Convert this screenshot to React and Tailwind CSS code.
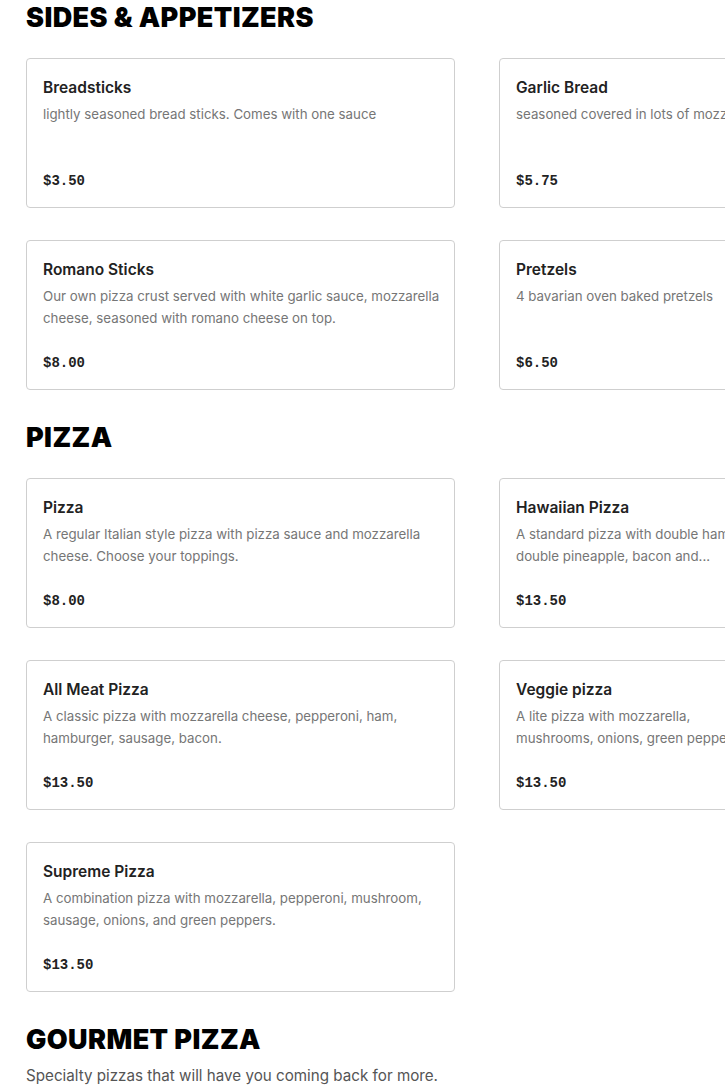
import React from 'react';

const sections = [
  {
    title: 'Sides & Appetizers',
    items: [
      { name: 'Breadsticks', lines: ['lightly seasoned bread sticks. Comes with one sauce'], price: '$3.50' },
      { name: 'Garlic Bread', lines: ['seasoned covered in lots of mozzarella cheese'], price: '$5.75' },
      { name: 'Romano Sticks', lines: ['Our own pizza crust served with white garlic sauce, mozzarella', 'cheese, seasoned with romano cheese on top.'], price: '$8.00' },
      { name: 'Pretzels', lines: ['4 bavarian oven baked pretzels'], price: '$6.50' },
    ],
  },
  {
    title: 'Pizza',
    items: [
      { name: 'Pizza', lines: ['A regular Italian style pizza with pizza sauce and mozzarella', 'cheese. Choose your toppings.'], price: '$8.00' },
      { name: 'Hawaiian Pizza', lines: ['A standard pizza with double ham, double bacon,', 'double pineapple, bacon and...'], price: '$13.50' },
      { name: 'All Meat Pizza', lines: ['A classic pizza with mozzarella cheese, pepperoni, ham,', 'hamburger, sausage, bacon.'], price: '$13.50' },
      { name: 'Veggie pizza', lines: ['A lite pizza with mozzarella,', 'mushrooms, onions, green peppers...'], price: '$13.50' },
      { name: 'Supreme Pizza', lines: ['A combination pizza with mozzarella, pepperoni, mushroom,', 'sausage, onions, and green peppers.'], price: '$13.50' },
    ],
  },
];

const headingFont = { fontFamily: 'Inter, "Liberation Sans", sans-serif' };

function MenuCard({ item }) {
  return (
    <div className="h-[150px] flex flex-col border border-[#cfcfcf] rounded-[4px] bg-white px-4 pt-[17px] pb-4">
      <div className="text-[15.5px] leading-6 font-semibold text-[#222]">{item.name}</div>
      <div className="mt-[3px] text-[13.3px] leading-[22px] text-[#767676] whitespace-nowrap">
        {item.lines.map((l, i) => (
          <div key={i}>{l}</div>
        ))}
      </div>
      <div className="mt-auto text-[14px] leading-5 font-bold text-[#222] font-['Liberation_Mono',monospace]">{item.price}</div>
    </div>
  );
}

export default function App() {
  return (
    <div className="w-full overflow-hidden bg-white font-['Inter','Liberation_Sans',sans-serif]">
      <div className="w-[902px] ml-[26px] flex flex-col gap-[30px]">
        {sections.map((s) => (
          <section key={s.title}>
            <h2 style={headingFont} className="text-[27px] leading-9 font-black uppercase tracking-[0.015em] text-black mb-[22px]">
              {s.title}
            </h2>
            <div className="grid grid-cols-2 gap-x-[44px] gap-y-[32px]">
              {s.items.map((it) => (
                <MenuCard key={it.name} item={it} />
              ))}
            </div>
          </section>
        ))}
        <section>
          <h2 style={headingFont} className="text-[27px] leading-9 font-black uppercase tracking-[0.015em] text-black">
            Gourmet Pizza
          </h2>
          <p className="mt-[6px] text-[15.2px] leading-6 text-[#555]">Specialty pizzas that will have you coming back for more.</p>
        </section>
      </div>
    </div>
  );
}
